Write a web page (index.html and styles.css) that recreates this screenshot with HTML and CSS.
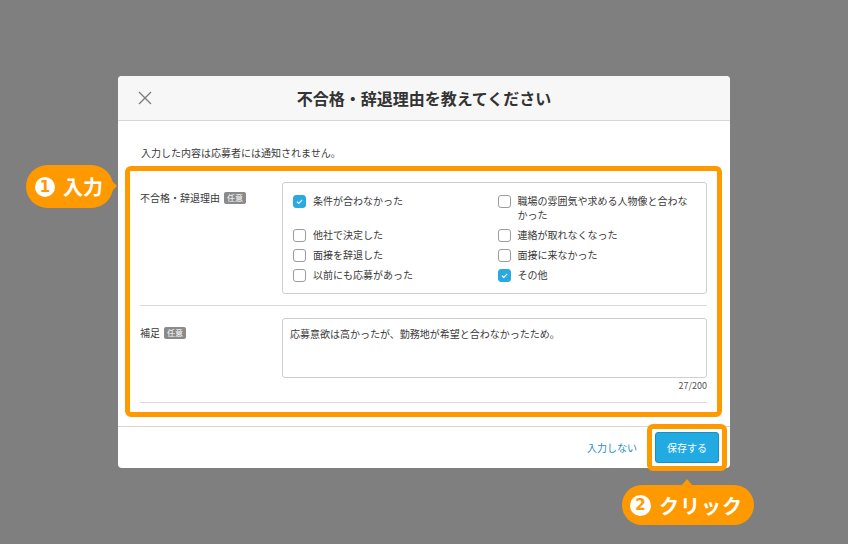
FILE: index.html
```html
<!DOCTYPE html>
<html lang="ja">

<head>
    <meta charset="UTF-8">
    <meta name="viewport" content="width=device-width, initial-scale=1.0">
    <title>不合格・辞退理由</title>
    <link rel="stylesheet" href="styles.css">
</head>

<body>
    <div class="modal">
        <div class="modal-header">
            <button class="close-btn" aria-label="閉じる">
                <svg width="14" height="14" viewBox="0 0 14 14">
                    <path d="M1 1 L13 13 M13 1 L1 13" stroke="#7a7a7a" stroke-width="1.3" fill="none" />
                </svg>
            </button>
            <h1 class="modal-title">不合格・辞退理由を教えてください</h1>
        </div>

        <div class="modal-body">
            <p class="note">入力した内容は応募者には通知されません。</p>

            <!-- highlighted input area -->
            <div class="form-frame">
                <div class="form-row">
                    <div class="form-label">不合格・辞退理由<span class="badge">任意</span></div>
                    <div class="form-field">
                        <div class="check-group">
                            <label class="check-item"><span class="checkbox checked"><svg viewBox="0 0 13 13"><path d="M3.5 6.8 L5.7 8.8 L9.6 4.6" /></svg></span><span>条件が合わなかった</span></label>
                            <label class="check-item"><span class="checkbox"></span><span>職場の雰囲気や求める人物像と合わなかった</span></label>
                            <label class="check-item"><span class="checkbox"></span><span>他社で決定した</span></label>
                            <label class="check-item"><span class="checkbox"></span><span>連絡が取れなくなった</span></label>
                            <label class="check-item"><span class="checkbox"></span><span>面接を辞退した</span></label>
                            <label class="check-item"><span class="checkbox"></span><span>面接に来なかった</span></label>
                            <label class="check-item"><span class="checkbox"></span><span>以前にも応募があった</span></label>
                            <label class="check-item"><span class="checkbox checked"><svg viewBox="0 0 13 13"><path d="M3.5 6.8 L5.7 8.8 L9.6 4.6" /></svg></span><span>その他</span></label>
                        </div>
                    </div>
                </div>

                <div class="form-row">
                    <div class="form-label">補足<span class="badge">任意</span></div>
                    <div class="form-field">
                        <div class="textbox">応募意欲は高かったが、勤務地が希望と合わなかったため。</div>
                        <div class="counter">27/200</div>
                    </div>
                </div>
            </div>
        </div>

        <div class="modal-footer">
            <a class="skip-link" href="#">入力しない</a>
            <button class="save-btn">保存する</button>
        </div>

        <!-- step callouts -->
        <div class="callout callout-input"><span class="step-num">1</span><span>入力</span></div>
        <div class="callout callout-click"><span class="step-num">2</span><span>クリック</span></div>
    </div>
</body>

</html>
```

FILE: styles.css
```css
* {
    box-sizing: border-box;
}

body {
    margin: 0;
    min-height: 100vh;
    background-color: #7f7f7f;
    font-family: "Noto Sans CJK JP", "Noto Sans", sans-serif;
    font-size: 10px;
    color: #3a3a3a;
    display: flex;
    align-items: center;
    justify-content: center;
}

.modal {
    position: relative;
    width: 612px;
    background: #fff;
    border-radius: 4px;
}

.modal-header {
    display: grid;
    grid-template-columns: 1fr auto 1fr;
    align-items: center;
    height: 45px;
    padding: 0 20px;
    background: #f7f7f7;
    border-bottom: 1px solid #d6d6d6;
    border-radius: 4px 4px 0 0;
}

.close-btn {
    justify-self: start;
    width: 14px;
    height: 14px;
    padding: 0;
    border: none;
    background: none;
    display: flex;
}

.modal-title {
    margin: 0;
    font-size: 16px;
    font-weight: bold;
    color: #333;
    line-height: 20px;
}

.modal-body {
    padding: 25px 8px 9px 7px;
}

.note {
    margin: 0 0 6px 16px;
    line-height: 14px;
}

.form-frame {
    border: 5px solid #ff9900;
    border-radius: 6px;
    padding: 0 10px 9px;
}

.form-row {
    display: flex;
    padding: 11px 0;
    border-bottom: 1px solid #d9d9d9;
}

.form-row + .form-row {
    padding: 12px 0 10px;
}

.form-label {
    width: 142px;
    flex: none;
    display: flex;
    align-items: center;
    align-self: flex-start;
    gap: 4px;
    padding-top: 9px;
    line-height: 14px;
}

.form-row + .form-row .form-label {
    padding-top: 8px;
}

.badge {
    display: inline-block;
    background: #8a8a8a;
    color: #fff;
    font-size: 8px;
    line-height: 12px;
    padding: 0 3px;
    border-radius: 2px;
}

.form-field {
    flex: 1;
}

.check-group {
    display: grid;
    grid-template-columns: 1fr 1fr;
    gap: 6px;
    padding: 11px 10px;
    border: 1px solid #cfcfcf;
    border-radius: 3px;
}

.check-item {
    display: flex;
    align-items: flex-start;
    gap: 7px;
    line-height: 14px;
}

.checkbox {
    flex: none;
    width: 13px;
    height: 13px;
    margin-top: 0.5px;
    border: 1px solid #9c9c9c;
    border-radius: 3px;
    background: #fff;
}

.checkbox.checked {
    border-color: #2aa8e0;
    background: #2aa8e0;
}

.checkbox svg {
    display: block;
    width: 11px;
    height: 11px;
}

.checkbox svg path {
    fill: none;
    stroke: #fff;
    stroke-width: 1.4;
}

.textbox {
    height: 60px;
    padding: 8px 7px;
    border: 1px solid #cfcfcf;
    border-radius: 3px;
    line-height: 14px;
}

.counter {
    margin-top: 2px;
    text-align: right;
    font-size: 9px;
    line-height: 12px;
    color: #555;
}

.modal-footer {
    display: flex;
    justify-content: flex-end;
    align-items: center;
    gap: 18px;
    height: 42px;
    padding: 0 11px 0 0;
    border-top: 1px solid #d6d6d6;
}

.skip-link {
    color: #1f8dc9;
    text-decoration: none;
}

.save-btn {
    position: relative;
    width: 64px;
    height: 31px;
    border: 1px solid #1b8fc4;
    border-radius: 3px;
    background: #22aae2;
    color: #fff;
    font-family: inherit;
    font-size: 10px;
}

/* orange highlight round the save button */
.save-btn::after {
    content: "";
    position: absolute;
    inset: -9px;
    border: 5px solid #ff9900;
    border-radius: 6px;
}

/* step callouts */
.callout {
    position: absolute;
    display: flex;
    align-items: center;
    gap: 8px;
    background: #ff9900;
    color: #fff;
    font-weight: bold;
    font-size: 20px;
    white-space: nowrap;
    border-radius: 22px;
}

.callout::after {
    content: "";
    position: absolute;
    border: 6px solid transparent;
}

.step-num {
    width: 20px;
    height: 20px;
    border-radius: 50%;
    background: #fff;
    color: #ff9900;
    font-family: "DejaVu Sans", sans-serif;
    font-size: 15px;
    line-height: 20px;
    text-align: center;
}

.callout-input {
    left: -92px;
    top: 89px;
    height: 43px;
    padding: 0 10px 0 9px;
}

.callout-input::after {
    right: -10px;
    top: 15px;
    border-left: 6px solid #ff9900;
}

.callout-click {
    left: 504px;
    top: 409px;
    height: 40px;
    padding: 0 11px 0 8px;
    letter-spacing: 1px;
}

.callout-click .step-num {
    width: 21px;
    height: 21px;
    line-height: 21px;
    letter-spacing: 0;
}

.callout-click::after {
    left: 60px;
    top: -6px;
    border-width: 0 5px 6px;
    border-bottom-color: #ff9900;
}
```
